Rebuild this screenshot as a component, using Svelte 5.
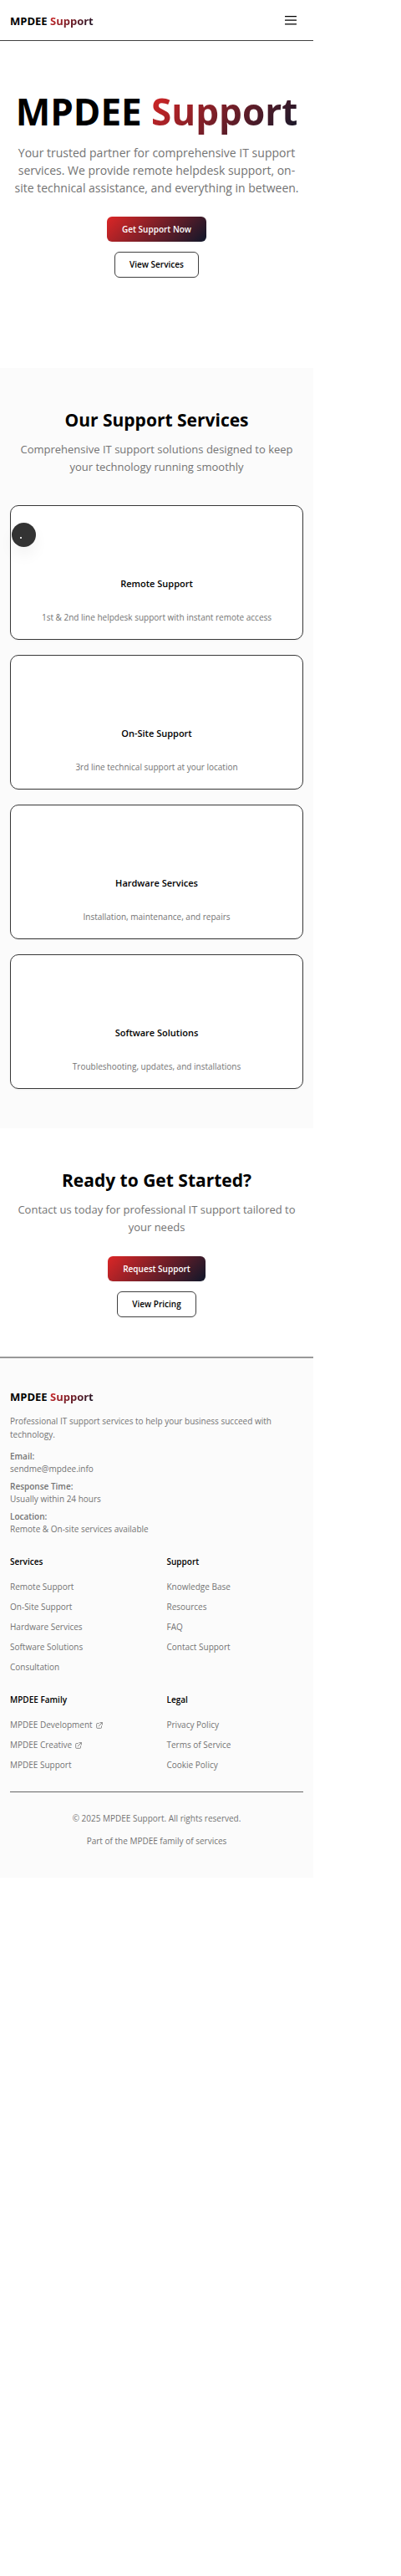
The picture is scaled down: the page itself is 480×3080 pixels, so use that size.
<script>
  const services = [
    ['Remote Support', '1st & 2nd line helpdesk support with instant remote access'],
    ['On-Site Support', '3rd line technical support at your location'],
    ['Hardware Services', 'Installation, maintenance, and repairs'],
    ['Software Solutions', 'Troubleshooting, updates, and installations'],
  ];
  const contacts = [
    ['Email:', 'sendme@mpdee.info'],
    ['Response Time:', 'Usually within 24 hours'],
    ['Location:', 'Remote & On-site services available'],
  ];
  const groups = [
    { title: 'Services', links: ['Remote Support', 'On-Site Support', 'Hardware Services', 'Software Solutions', 'Consultation'] },
    { title: 'Support', links: ['Knowledge Base', 'Resources', 'FAQ', 'Contact Support'] },
    { title: 'MPDEE Family', links: ['MPDEE Development', 'MPDEE Creative', 'MPDEE Support'], external: 2 },
    { title: 'Legal', links: ['Privacy Policy', 'Terms of Service', 'Cookie Policy'] },
  ];
</script>

<div class="page">
  <header>
    <a class="logo" href="#top">MPDEE <span class="accent">Support</span></a>
    <button class="menu" aria-label="Open menu">
      <svg width="14" height="12" viewBox="0 0 14 12" aria-hidden="true">
        <path d="M0.4 0.7H13.6M0.4 5.2H13.6M0.4 9.8H13.6" stroke="#000" stroke-width="1.3" stroke-linecap="round" />
      </svg>
    </button>
  </header>

  <main>
    <section class="hero">
      <h1>MPDEE <span class="accent">Support</span></h1>
      <p class="lead">Your trusted partner for comprehensive IT support services. We provide remote helpdesk support, on-site technical assistance, and everything in between.</p>
      <div class="actions">
        <a class="btn primary" href="#support">Get Support Now</a>
        <a class="btn outline" href="#services">View Services</a>
      </div>
    </section>

    <section class="services" id="services">
      <h2>Our Support Services</h2>
      <p class="sub">Comprehensive IT support solutions designed to keep your technology running smoothly</p>
      <div class="cards">
        {#each services as [title, text]}
          <article>
            <h3>{title}</h3>
            <p>{text}</p>
          </article>
        {/each}
        <span class="bubble" aria-hidden="true"></span>
      </div>
    </section>

    <section class="cta" id="support">
      <h2>Ready to Get Started?</h2>
      <p class="sub">Contact us today for professional IT support tailored to your needs</p>
      <div class="actions">
        <a class="btn primary" href="#request">Request Support</a>
        <a class="btn outline" href="#pricing">View Pricing</a>
      </div>
    </section>
  </main>

  <footer>
    <a class="logo" href="#top">MPDEE <span class="accent">Support</span></a>
    <p class="about">Professional IT support services to help your business succeed with technology.</p>
    <dl>
      {#each contacts as [label, value]}
        <div>
          <dt>{label}</dt>
          <dd>{value}</dd>
        </div>
      {/each}
    </dl>
    <div class="groups">
      {#each groups as group}
        <nav aria-label={group.title}>
          <h4>{group.title}</h4>
          <ul>
            {#each group.links as link, i}
              <li>
                <a href="#link">{link}{#if i < (group.external ?? 0)}<svg width="10" height="10" viewBox="0 0 24 24" aria-hidden="true"><path d="M10 6H6a2 2 0 0 0-2 2v10a2 2 0 0 0 2 2h10a2 2 0 0 0 2-2v-4M14 4h6v6M20 4L10 14" fill="none" stroke="currentColor" stroke-width="2" stroke-linecap="round" stroke-linejoin="round" /></svg>{/if}</a>
              </li>
            {/each}
          </ul>
        </nav>
      {/each}
    </div>
    <div class="legal">
      <p>© 2025 MPDEE Support. All rights reserved.</p>
      <p>Part of the MPDEE family of services</p>
    </div>
  </footer>
</div>

<style>
  :global(body) { background: #fff; }
  .page {
    max-width: 375px;
    font-family: "Open Sans", "Noto Sans", sans-serif;
    font-size: 10px;
    line-height: 15px;
    color: #737373;
  }
  :where(h1, h2, h3, h4, p, ul, dl, dd) { margin: 0; padding: 0; }
  a { color: inherit; text-decoration: none; }
  header {
    display: flex;
    justify-content: space-between;
    align-items: center;
    height: 46px;
    padding: 2px 20px 0 12px;
    border-bottom: 1px solid #404040;
  }
  .logo { display: block; font-size: 13px; line-height: 21px; font-weight: 700; color: #000; }
  .accent {
    background: linear-gradient(135deg, #dc2626, #0f172a);
    -webkit-background-clip: text;
    background-clip: text;
    color: transparent;
  }
  .menu { display: flex; padding: 0; border: 0; background: none; }
  .hero { padding: 56px 12px 108px; text-align: center; }
  h1 { font-size: 44px; line-height: 56px; font-weight: 700; color: #000; white-space: nowrap; }
  .lead { margin-top: 11px; font-size: 14px; line-height: 21px; }
  .actions { display: flex; flex-direction: column; align-items: center; gap: 12px; margin-top: 24px; }
  .btn {
    padding: 7px 18px;
    border-radius: 6px;
    font-size: 10px;
    line-height: 16px;
    font-weight: 600;
  }
  .primary { background: linear-gradient(135deg, #dc2626, #0f172a); color: #fff; box-shadow: 0 1px 2px #0000000d; }
  .outline { border: 1px solid #404040; padding: 7px 17px; line-height: 15px; color: #000; }
  .services { padding: 47px 12px; background: #fbfbfb; text-align: center; }
  h2 { font-size: 21px; line-height: 30px; font-weight: 700; color: #000; }
  .sub { margin-top: 10px; font-size: 13px; line-height: 21px; }
  .cards { position: relative; display: grid; gap: 18px; margin-top: 35px; }
  article {
    padding: 84px 18px 18px;
    border: 1px solid #383838;
    border-radius: 10px;
    background: #fff;
    box-shadow: 0 1px 2px #0000000d;
  }
  h3 { font-size: 11px; line-height: 18px; font-weight: 600; color: #000; }
  article p { margin-top: 24px; }
  .bubble {
    position: absolute;
    top: 21px;
    left: 2px;
    width: 29px;
    height: 29px;
    border-radius: 50%;
    background: radial-gradient(circle at 11px 18px, #ddd 1px, #333 1px);
    box-shadow: 0 10px 18px #0000000d;
  }
  .cta { padding: 47px 12px; text-align: center; }
  footer { padding: 36px 12px; border-top: 2px solid #999; background: #fbfbfb; }
  .about { margin-top: 10px; line-height: 16px; }
  dl { display: grid; gap: 6px; margin-top: 11px; }
  dt { font-weight: 600; }
  .groups { display: grid; grid-template-columns: 1fr 1fr; gap: 24px; margin-top: 24px; }
  h4 { font-size: 10px; font-weight: 600; color: #000; }
  ul { display: grid; gap: 9px; margin-top: 15px; list-style: none; }
  li a { display: flex; align-items: center; gap: 3px; }
  .legal { display: grid; gap: 12px; margin-top: 24px; padding-top: 24px; border-top: 1px solid #666; text-align: center; }
</style>
